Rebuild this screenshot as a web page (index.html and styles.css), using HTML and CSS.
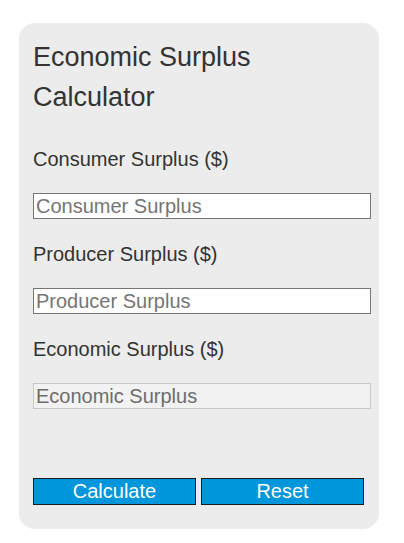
FILE: index.html
```html
<!DOCTYPE html>
<html lang="en">
<head>
<meta charset="utf-8">
<title>Economic Surplus Calculator</title>
<link rel="stylesheet" href="styles.css">
</head>
<body>
<div class="page">
  <div class="card">
    <h1 class="title">Economic Surplus Calculator</h1>
    <div class="field">
      <label class="label" for="cs">Consumer Surplus ($)</label>
      <input class="input" id="cs" type="text" placeholder="Consumer Surplus">
    </div>
    <div class="field">
      <label class="label" for="ps">Producer Surplus ($)</label>
      <input class="input" id="ps" type="text" placeholder="Producer Surplus">
    </div>
    <div class="field field-last">
      <label class="label" for="es">Economic Surplus ($)</label>
      <input class="input input-disabled" id="es" type="text" placeholder="Economic Surplus" disabled>
    </div>
    <div class="buttons">
      <button class="btn" type="button">Calculate</button>
      <button class="btn" type="button">Reset</button>
    </div>
  </div>
</div>
</body>
</html>
```
FILE: styles.css
```css
html, body {
  margin: 0;
  padding: 0;
  background: #ffffff;
}
body {
  font-family: "Liberation Sans", Arial, sans-serif;
  color: #333333;
}
.page {
  padding: 23px 25px 14px 19px;
}
.card {
  width: 360px;
  box-sizing: border-box;
  background: #ececec;
  border-radius: 16px;
  padding: 14px 14px 24px 14px;
}
.title {
  margin: 0 0 31px 0;
  font-size: 27px;
  font-weight: normal;
  line-height: 40px;
}
.field {
  display: flex;
  flex-direction: column;
}
.label {
  display: block;
  font-size: 20px;
  line-height: 22px;
  margin-bottom: 23px;
}
.input {
  width: 338px;
  box-sizing: border-box;
  height: 26px;
  margin: 0 0 24px 0;
  padding: 1px 2px;
  border: 1px solid #767676;
  background: #ffffff;
  font-family: "Liberation Sans", Arial, sans-serif;
  font-size: 20px;
  color: #333333;
}
.input::placeholder {
  color: #757575;
  opacity: 1;
}
.input-disabled {
  background: #f2f2f2;
  border-color: #c8c8c8;
}
.input-disabled::placeholder {
  color: #6d6d6d;
}
.field-last .input {
  margin-bottom: 69px;
}
.buttons {
  display: flex;
  gap: 5px;
  width: 331px;
}
.btn {
  flex: 1 1 0;
  height: 27px;
  margin: 0;
  padding: 0;
  border: 1px solid #1a1a1a;
  background: #0096db;
  color: #ffffff;
  font-family: "Liberation Sans", Arial, sans-serif;
  font-size: 20px;
  line-height: 25px;
  cursor: pointer;
}
```
